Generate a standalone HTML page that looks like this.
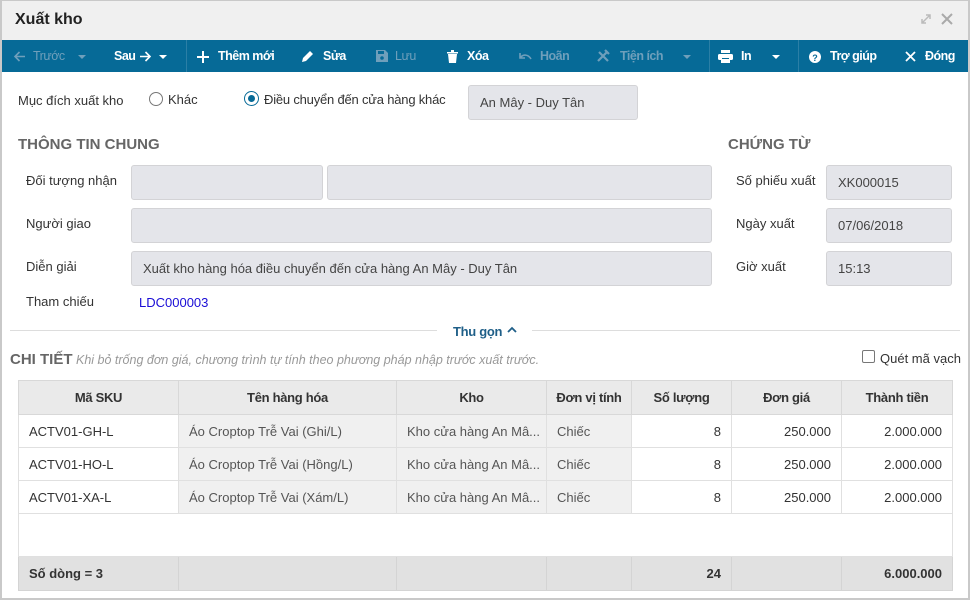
<!DOCTYPE html>
<html><head><meta charset="utf-8"><style>
*{box-sizing:border-box;margin:0;padding:0}
body{width:970px;height:600px;position:relative;background:#fff;font-family:"Liberation Sans",sans-serif;font-size:13px;color:#333;overflow:hidden}
.a{position:absolute;white-space:nowrap}
.frame{position:absolute;left:0;top:0;width:970px;height:600px;border:2px solid #c9c9c9;border-top-width:1px}
.tb{position:absolute;left:2px;top:40px;width:966px;height:32px;background:#066a97}
.tt{position:absolute;top:49px;color:#fff;font-weight:bold;font-size:12.5px;letter-spacing:-0.5px}
.dis{color:#6f9fbb}
.sep{position:absolute;top:40px;width:1px;height:32px;background:#2b7fa6}
.inp{position:absolute;background:#e4e5ea;border:1px solid #d3d3d6;border-radius:3px;height:35px;padding:9px 0 0 11px;color:#444;font-size:13px}
.lbl{position:absolute;color:#333;font-size:13px}
.h{position:absolute;font-weight:bold;color:#666;font-size:15px}
table{position:absolute;left:18px;top:380px;border-collapse:collapse;font-size:13px;table-layout:fixed;width:934px}
td{border:1px solid #e0e0e0;height:33px;padding:0 10px;white-space:nowrap;overflow:hidden}
th{border:1px solid #d8d8d8;height:34px;background:#eaeaea;font-weight:bold;color:#333;white-space:nowrap;overflow:hidden;letter-spacing:-0.3px}
.g{background:#f0f0f0;color:#555}
.r{text-align:right}
.ft td{background:#e1e1e1;font-weight:bold;border-color:#d4d4d4;height:34px}
</style></head><body>
<div class="a" style="left:0;top:0;width:970px;height:40px;background:#f0f0f0"></div>
<div class="frame"></div>
<div class="a" style="left:15px;top:11px;font-size:16px;font-weight:bold;color:#222">Xuất kho</div>
<svg class="a" style="left:920px;top:13px" width="12" height="12"><path d="M2 10L10 2M6 2h4v4M2 6v4h4" stroke="#bbb" stroke-width="1.5" fill="none"/></svg>
<svg class="a" style="left:941px;top:13px" width="12" height="12"><path d="M1 1L11 11M11 1L1 11" stroke="#aaa" stroke-width="2"/></svg>

<div class="tb"></div>
<div class="sep" style="left:186px"></div><div class="sep" style="left:709px"></div><div class="sep" style="left:798px"></div>
<svg class="a" style="left:13px;top:50px" width="13" height="13"><path d="M12 6.5H2M6.5 2L2 6.5 6.5 11" stroke="#6f9fbb" stroke-width="1.6" fill="none"/></svg>
<div class="tt dis" style="left:33px;font-weight:normal">Trước</div>
<svg class="a" style="left:78px;top:55px" width="8" height="5"><path d="M0 0h8L4 4z" fill="#6f9fbb"/></svg>
<div class="tt" style="left:114px">Sau</div>
<svg class="a" style="left:139px;top:50px" width="13" height="13"><path d="M1 6.5H11M6.5 2L11 6.5 6.5 11" stroke="#fff" stroke-width="1.6" fill="none"/></svg>
<svg class="a" style="left:159px;top:55px" width="8" height="5"><path d="M0 0h8L4 4z" fill="#fff"/></svg>
<svg class="a" style="left:197px;top:51px" width="12" height="12"><path d="M6 0v12M0 6h12" stroke="#fff" stroke-width="2"/></svg>
<div class="tt" style="left:218px">Thêm mới</div>
<svg class="a" style="left:301px;top:50px" width="13" height="13"><path d="M1 12l1-4 7-7 3 3-7 7z" fill="#fff"/></svg>
<div class="tt" style="left:323px">Sửa</div>
<svg class="a" style="left:376px;top:50px" width="12" height="12"><path d="M0 0h9l3 3v9H0z" fill="#6f9fbb"/><rect x="2" y="1" width="6" height="3" fill="#066a97"/><circle cx="6" cy="8" r="1.8" fill="#066a97"/></svg>
<div class="tt dis" style="left:395px;font-weight:normal">Lưu</div>
<svg class="a" style="left:447px;top:50px" width="11" height="13"><path d="M0 2h11v1.5H0zM4 0h3v2H4zM1 4h9l-1 9H2z" fill="#fff"/></svg>
<div class="tt" style="left:467px">Xóa</div>
<svg class="a" style="left:518px;top:52px" width="14" height="9"><path d="M2 1v5h5M2 6c3-4 8-4 11 1" stroke="#6f9fbb" stroke-width="1.6" fill="none"/></svg>
<div class="tt dis" style="left:540px">Hoãn</div>
<svg class="a" style="left:596px;top:49px" width="15" height="14"><path d="M2 12L11 3M3 3l9 9M9 1l4 4" stroke="#6f9fbb" stroke-width="2.2" fill="none"/></svg>
<div class="tt dis" style="left:620px">Tiện ích</div>
<svg class="a" style="left:683px;top:55px" width="8" height="5"><path d="M0 0h8L4 4z" fill="#6f9fbb"/></svg>
<svg class="a" style="left:718px;top:50px" width="15" height="13"><rect x="3" y="0" width="9" height="3" fill="#fff"/><rect x="0" y="4" width="15" height="6" rx="1.5" fill="#fff"/><rect x="3" y="9" width="9" height="4" fill="#fff"/><rect x="4" y="8" width="7" height="1" fill="#066a97"/></svg>
<div class="tt" style="left:741px">In</div>
<svg class="a" style="left:772px;top:55px" width="8" height="5"><path d="M0 0h8L4 4z" fill="#fff"/></svg>
<svg class="a" style="left:809px;top:51px" width="12" height="12"><circle cx="6" cy="6" r="6" fill="#fff"/><text x="6" y="10" font-size="9" font-weight="bold" text-anchor="middle" fill="#066a97" font-family="Liberation Sans">?</text></svg>
<div class="tt" style="left:830px">Trợ giúp</div>
<svg class="a" style="left:905px;top:51px" width="11" height="11"><path d="M1 1L10 10M10 1L1 10" stroke="#fff" stroke-width="1.8"/></svg>
<div class="tt" style="left:925px">Đóng</div>

<div class="lbl" style="left:18px;top:93px">Mục đích xuất kho</div>
<div class="a" style="left:149px;top:92px;width:14px;height:14px;border:1.5px solid #777;border-radius:50%"></div>
<div class="lbl" style="left:168px;top:92px">Khác</div>
<div class="a" style="left:244px;top:91px;width:15px;height:15px;border:1.5px solid #066a97;border-radius:50%"><div style="margin:2.5px;width:7px;height:7px;border-radius:50%;background:#066a97"></div></div>
<div class="lbl" style="left:264px;top:92px;letter-spacing:-0.2px">Điều chuyển đến cửa hàng khác</div>
<div class="inp" style="left:468px;top:85px;width:170px">An Mây - Duy Tân</div>

<div class="h" style="left:18px;top:136px">THÔNG TIN CHUNG</div>
<div class="h" style="left:728px;top:136px">CHỨNG TỪ</div>
<div class="lbl" style="left:26px;top:173px">Đối tượng nhận</div>
<div class="lbl" style="left:26px;top:216px">Người giao</div>
<div class="lbl" style="left:26px;top:259px">Diễn giải</div>
<div class="lbl" style="left:26px;top:294px">Tham chiếu</div>
<div class="inp" style="left:131px;top:165px;width:192px"></div>
<div class="inp" style="left:327px;top:165px;width:385px"></div>
<div class="inp" style="left:131px;top:208px;width:581px"></div>
<div class="inp" style="left:131px;top:251px;width:581px">Xuất kho hàng hóa điều chuyển đến cửa hàng An Mây - Duy Tân</div>
<div class="a" style="left:139px;top:295px;color:#1a0dd6">LDC000003</div>
<div class="lbl" style="left:736px;top:173px">Số phiếu xuất</div>
<div class="lbl" style="left:736px;top:216px">Ngày xuất</div>
<div class="lbl" style="left:736px;top:259px">Giờ xuất</div>
<div class="inp" style="left:826px;top:165px;width:126px">XK000015</div>
<div class="inp" style="left:826px;top:208px;width:126px">07/06/2018</div>
<div class="inp" style="left:826px;top:251px;width:126px">15:13</div>

<div class="a" style="left:10px;top:330px;width:427px;height:1px;background:#ddd"></div>
<div class="a" style="left:532px;top:330px;width:428px;height:1px;background:#ddd"></div>
<div class="a" style="left:453px;top:324px;font-weight:bold;color:#1f5f88;letter-spacing:-0.3px">Thu gọn</div>
<svg class="a" style="left:507px;top:326px" width="10" height="7"><path d="M1 6l4-4 4 4" stroke="#1f5f88" stroke-width="1.8" fill="none"/></svg>

<div class="a" style="left:10px;top:351px;font-size:15px;font-weight:bold;color:#666">CHI TIẾT</div>
<div class="a" style="left:76px;top:353px;font-style:italic;color:#999;font-size:12.5px">Khi bỏ trống đơn giá, chương trình tự tính theo phương pháp nhập trước xuất trước.</div>
<div class="a" style="left:862px;top:350px;width:13px;height:13px;border:1.5px solid #777;border-radius:2px"></div>
<div class="lbl" style="left:880px;top:351px">Quét mã vạch</div>

<table>
<colgroup><col style="width:160px"><col style="width:218px"><col style="width:150px"><col style="width:85px"><col style="width:100px"><col style="width:110px"><col style="width:111px"></colgroup>
<tr><th>Mã SKU</th><th>Tên hàng hóa</th><th>Kho</th><th style="padding:0 4px">Đơn vị tính</th><th>Số lượng</th><th>Đơn giá</th><th>Thành tiền</th></tr>
<tr><td>ACTV01-GH-L</td><td class="g">Áo Croptop Trễ Vai (Ghi/L)</td><td class="g">Kho cửa hàng An Mâ...</td><td class="g">Chiếc</td><td class="r">8</td><td class="r">250.000</td><td class="r">2.000.000</td></tr>
<tr><td>ACTV01-HO-L</td><td class="g">Áo Croptop Trễ Vai (Hồng/L)</td><td class="g">Kho cửa hàng An Mâ...</td><td class="g">Chiếc</td><td class="r">8</td><td class="r">250.000</td><td class="r">2.000.000</td></tr>
<tr><td>ACTV01-XA-L</td><td class="g">Áo Croptop Trễ Vai (Xám/L)</td><td class="g">Kho cửa hàng An Mâ...</td><td class="g">Chiếc</td><td class="r">8</td><td class="r">250.000</td><td class="r">2.000.000</td></tr>
<tr><td colspan="7" style="height:43px"></td></tr>
<tr class="ft"><td>Số dòng = 3</td><td></td><td></td><td></td><td class="r">24</td><td></td><td class="r">6.000.000</td></tr>
</table>
</body></html>
